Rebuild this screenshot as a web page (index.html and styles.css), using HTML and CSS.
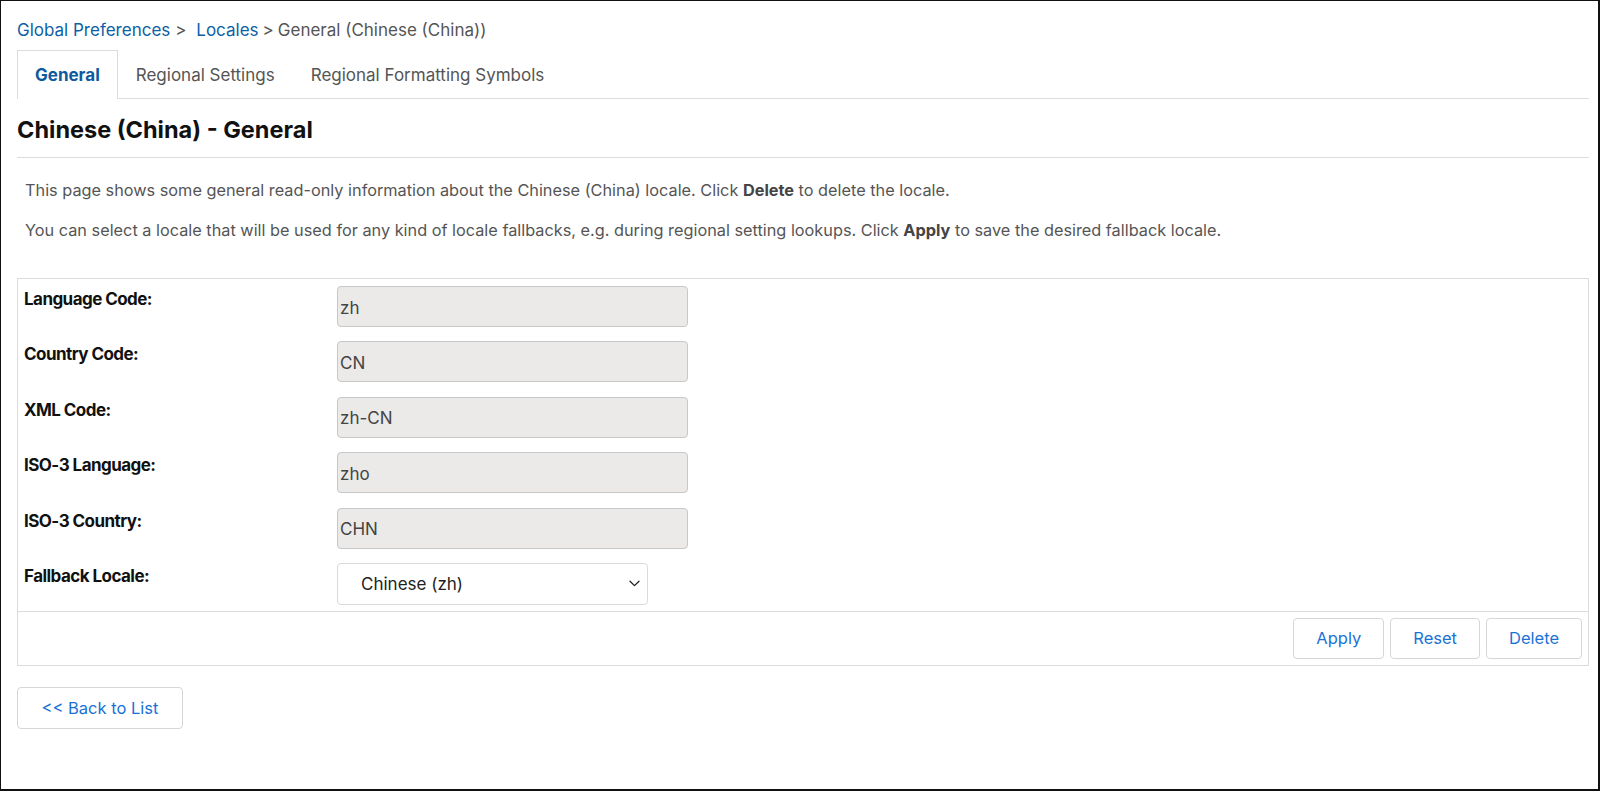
FILE: index.html
```html
<!DOCTYPE html>
<html lang="en">
<head>
<meta charset="utf-8">
<title>Chinese (China) - General</title>
<link rel="stylesheet" href="styles.css">
</head>
<body>
<div class="frame">
  <nav class="crumbs">
    <a href="#">Global Preferences</a><span class="sep">&gt;</span>
    <a href="#">Locales</a><span class="sep2">&gt;</span><span class="current">General (Chinese (China))</span>
  </nav>

  <ul class="tabs">
    <li class="tab active">General</li>
    <li class="tab">Regional Settings</li>
    <li class="tab">Regional Formatting Symbols</li>
  </ul>

  <h1 class="title">Chinese (China) - General</h1>

  <p class="info">This page shows some general read-only information about the Chinese (China) locale. Click <b>Delete</b> to delete the locale.</p>
  <p class="info">You can select a locale that will be used for any kind of locale fallbacks, e.g. during regional setting lookups. Click <b>Apply</b> to save the desired fallback locale.</p>

  <form class="panel">
    <div class="panel-body">
      <div class="row"><label class="label">Language Code:</label><input class="field" value="zh" readonly></div>
      <div class="row"><label class="label">Country Code:</label><input class="field" value="CN" readonly></div>
      <div class="row"><label class="label">XML Code:</label><input class="field" value="zh-CN" readonly></div>
      <div class="row"><label class="label">ISO-3 Language:</label><input class="field" value="zho" readonly></div>
      <div class="row"><label class="label">ISO-3 Country:</label><input class="field" value="CHN" readonly></div>
      <div class="row row-last"><label class="label">Fallback Locale:</label>
        <div class="select">
          <span class="select-text">Chinese (zh)</span>
          <svg class="chev" width="11" height="7" viewBox="0 0 11 7"><path d="M1 1.2 L5.5 5.6 L10 1.2" fill="none" stroke="#222" stroke-width="1.3" stroke-linecap="round" stroke-linejoin="round"/></svg>
        </div>
      </div>
    </div>
    <div class="panel-foot">
      <button type="button" class="btn">Apply</button>
      <button type="button" class="btn">Reset</button>
      <button type="button" class="btn">Delete</button>
    </div>
  </form>

  <button type="button" class="btn btn-back">&lt;&lt; Back to List</button>
</div>
</body>
</html>
```

FILE: styles.css
```css
html, body {
  margin: 0;
  padding: 0;
  background: #fff;
}
body {
  font-family: Inter, "Liberation Sans", Arial, sans-serif;
  color: #222;
}
.frame {
  box-sizing: border-box;
  width: 1600px;
  height: 791px;
  border: 1px solid #111;
  border-right-width: 2px;
  border-bottom-width: 2px;
  padding: 0 9px 0 16px;
}
.crumbs {
  margin-top: 19px;
  height: 20px;
  line-height: 20px;
  font-size: 17px;
  color: #555;
  white-space: nowrap;
}
.crumbs a {
  color: #0d5fa6;
  text-decoration: none;
}
.crumbs .sep {
  margin: 0 5px 0 5px;
  color: #555;
}
.crumbs .sep2 {
  margin: 0 4px 0 4px;
  color: #555;
}
.tabs {
  list-style: none;
  margin: 10px 0 0;
  padding: 0;
  display: flex;
  height: 48px;
  border-bottom: 1px solid #dcdcdc;
}
.tab {
  box-sizing: border-box;
  height: 49px;
  padding: 0 17px;
  border: 1px solid transparent;
  border-bottom: none;
  display: flex;
  align-items: center;
  font-size: 17px;
  color: #555;
  background: transparent;
}
.tab.active {
  border-color: #dcdcdc;
  background: #fff;
  color: #0d5a9e;
  font-weight: 700;
}
.title {
  margin: 19px 0 0;
  height: 24px;
  line-height: 24px;
  font-size: 23.5px;
  font-weight: 700;
  color: #111;
  padding-bottom: 15px;
  border-bottom: 1px solid #dcdcdc;
}
.info {
  margin: 22px 0 0 8px;
  font-size: 16.3px;
  line-height: 20px;
  color: #555;
}
.info + .info {
  margin-top: 20px;
}
.info b {
  color: #444;
  font-weight: 700;
}
.panel {
  margin: 38px 0 0;
  border: 1px solid #dcdcdc;
}
.panel-body {
  padding: 7px 6px 6px;
}
.row {
  display: flex;
  align-items: flex-start;
  margin-bottom: 14.4px;
}
.row-last {
  margin-bottom: 0;
}
.label {
  width: 313px;
  flex: none;
  padding-top: 3px;
  line-height: 20px;
  font-size: 17px;
  font-weight: 700;
  color: #111;
  letter-spacing: -0.55px;
}
.field {
  box-sizing: border-box;
  width: 351px;
  height: 41px;
  margin: 0;
  padding: 2px 2px 0;
  border: 1px solid #c8c8c8;
  border-radius: 4px;
  background: #ebeae9;
  font-family: inherit;
  font-size: 17px;
  color: #444;
  outline: none;
}
.select {
  box-sizing: border-box;
  width: 311px;
  height: 42px;
  border: 1px solid #dadada;
  border-radius: 4px;
  background: #fff;
  display: flex;
  align-items: center;
  justify-content: space-between;
  padding: 0 7px 0 23px;
}
.select-text {
  font-size: 17px;
  color: #222;
}
.chev {
  display: block;
}
.panel-foot {
  border-top: 1px solid #dcdcdc;
  padding: 6px;
  display: flex;
  justify-content: flex-end;
  gap: 6px;
}
.btn {
  box-sizing: border-box;
  height: 41px;
  margin: 0;
  padding: 0 22px;
  border: 1px solid #d6d6d6;
  border-radius: 4px;
  background: #fff;
  font-family: inherit;
  font-size: 16.5px;
  color: #1a72d6;
  cursor: pointer;
}
.btn-back {
  display: block;
  margin-top: 21px;
  height: 42px;
  width: 166px;
  padding: 0;
}
```
